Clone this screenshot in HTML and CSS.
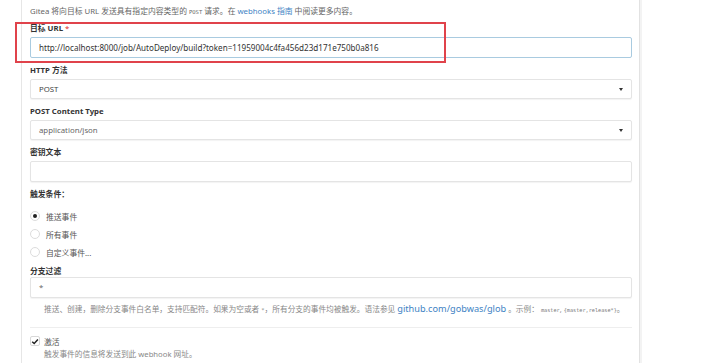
FILE: index.html
```html
<!DOCTYPE html>
<html lang="zh">
<head>
<meta charset="utf-8">
<link rel="stylesheet" href="styles.css">
</head>
<body>
<div class="page">
  <form class="segment">
    <p class="desc">Gitea 将向目标 URL 发送具有指定内容类型的 <span class="mono-sm">POST</span> 请求。在 <a class="link">webhooks 指南</a> 中阅读更多内容。</p>

    <div class="field">
      <label class="lbl">目标 URL <span class="req">*</span></label>
      <div class="input focus url">http://localhost:8000/job/AutoDeploy/build?token=11959004c4fa456d23d171e750b0a816</div>
    </div>

    <div class="field">
      <label class="lbl">HTTP 方法</label>
      <div class="input select">POST<span class="caret"></span></div>
    </div>

    <div class="field">
      <label class="lbl">POST Content Type</label>
      <div class="input select muted">application/json<span class="caret"></span></div>
    </div>

    <div class="field">
      <label class="lbl">密钥文本</label>
      <div class="input"></div>
    </div>

    <div class="field trig">
      <label class="lbl">触发条件：</label>
    </div>

    <div class="radios">
      <div class="radio"><span class="dot on"></span><span>推送事件</span></div>
      <div class="radio"><span class="dot"></span><span>所有事件</span></div>
      <div class="radio"><span class="dot"></span><span>自定义事件...</span></div>
    </div>

    <div class="field branch">
      <label class="lbl">分支过滤</label>
      <div class="input muted">*</div>
      <p class="help">推送、创建，删除分支事件白名单，支持匹配符。如果为空或者 <span class="mono-sm">*</span>，所有分支的事件均被触发。语法参见 <a class="link big">github.com/gobwas/glob</a> 。示例： <code>master</code>, <code>{master,release*}</code>。</p>
    </div>

    <div class="divider"></div>

    <div class="check">
      <span class="box"><svg viewBox="0 0 10 10" width="9" height="9"><path d="M1.5 5.2 L4 7.6 L8.6 2.4" fill="none" stroke="#222" stroke-width="1.8"/></svg></span>
      <span class="check-lbl">激活</span>
    </div>
    <p class="help">触发事件的信息将发送到此 webhook 网址。</p>

    <div class="highlight"></div>
  </form>
</div>
</body>
</html>
```

FILE: styles.css
```css
html, body {
  margin: 0;
  padding: 0;
  background: #fff;
}
body {
  font-family: "Noto Sans", "Noto Sans CJK SC", sans-serif;
  font-size: 7.8px;
  color: #333;
  width: 720px;
  height: 363px;
  overflow: hidden;
}
.page {
  padding-left: 21px;
}
.segment {
  position: relative;
  width: 602px;
  padding: 6px 7px 0 8px;
  border-left: 1px solid #e6e6e6;
  border-right: 1px solid #e2e2e2;
  box-shadow: 2px 0 0 #f3f3f3;
  min-height: 363px;
  box-sizing: content-box;
}
.desc {
  margin: 0 0 5px;
  line-height: 11px;
  color: #666;
}
.mono-sm {
  font-family: "DejaVu Sans Mono", monospace;
  font-size: 5.5px;
}
.link {
  color: #4183c4;
  text-decoration: none;
}
.link.big {
  font-size: 9.2px;
}
.field {
  margin-bottom: 7px;
}
.lbl {
  display: block;
  font-weight: bold;
  line-height: 11px;
  margin-bottom: 3px;
  color: #333;
}
.req {
  color: #db2828;
  font-weight: normal;
}
.input {
  position: relative;
  height: 19px;
  line-height: 19px;
  border: 1px solid #e4e4e4;
  border-radius: 2px;
  padding: 0 8px;
  box-shadow: 0 1px 1px rgba(0,0,0,0.05);
  color: #444;
  background: #fff;
}
.input.url {
  font-size: 8.1px;
  color: #333;
}
.input.select {
  height: 18px;
  line-height: 18px;
}
.input.focus {
  border-color: #a9cbe0;
  box-shadow: none;
}
.input.muted {
  color: #666;
}
.caret {
  position: absolute;
  right: 8px;
  top: 8px;
  width: 0;
  height: 0;
  border-left: 2.5px solid transparent;
  border-right: 2.5px solid transparent;
  border-top: 3px solid #333;
}
.trig {
  margin-bottom: 0;
}
.radios {
  padding-top: 4px;
}
.radio {
  display: flex;
  align-items: center;
  height: 18px;
  color: #555;
}
.dot {
  width: 8px;
  height: 8px;
  border: 1px solid #dcdcdc;
  border-radius: 50%;
  margin: 0 6px 0 0;
  box-sizing: content-box;
  position: relative;
}
.dot.on::after {
  content: "";
  position: absolute;
  left: 2px;
  top: 2px;
  width: 4px;
  height: 4px;
  border-radius: 50%;
  background: #222;
}
.branch {
  margin-top: 5px;
}
.branch .lbl {
  margin-bottom: 0;
}
.help {
  margin: 4px 0 0 14px;
  line-height: 13px;
  color: #888;
  font-size: 7.7px;
  white-space: nowrap;
}
code {
  font-family: "DejaVu Sans Mono", monospace;
  font-size: 5.2px;
  color: #777;
}
.divider {
  height: 1px;
  background: #eee;
  margin: 10px 0 7px;
}
.check {
  display: flex;
  align-items: center;
  height: 12px;
}
.box {
  width: 10px;
  height: 10px;
  border: 1px solid #d8d8d8;
  border-radius: 2px;
  box-sizing: border-box;
  display: flex;
  align-items: center;
  justify-content: center;
  margin-right: 4px;
}
.check-lbl {
  color: #555;
}
.check + .help {
  margin-top: 1px;
}
.highlight {
  position: absolute;
  left: -7px;
  top: 22px;
  width: 427px;
  height: 37px;
  border: 2px solid #e0434b;
  pointer-events: none;
}
```
